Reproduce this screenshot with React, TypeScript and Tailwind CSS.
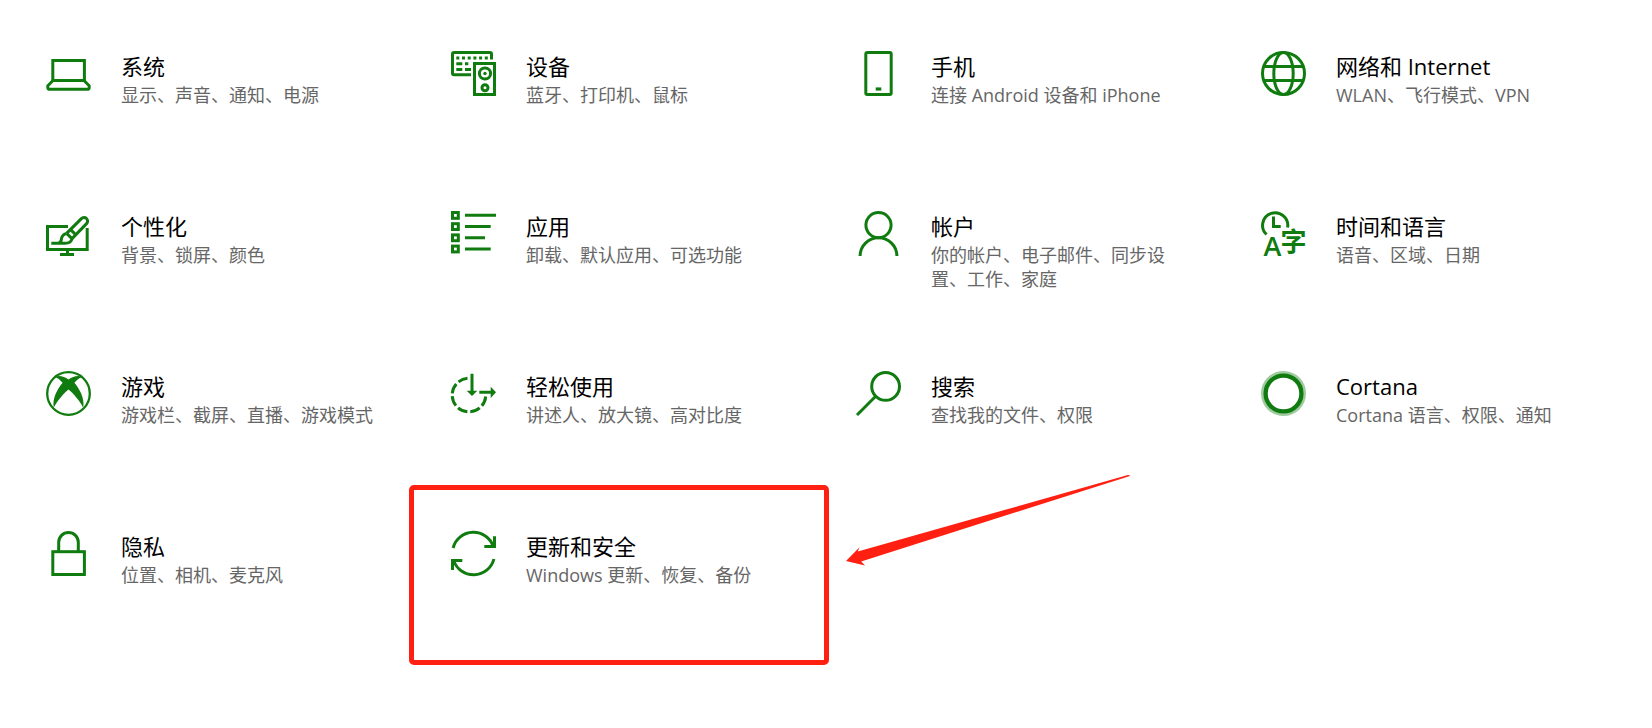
import type { ReactNode } from 'react'

const icons: Record<string, ReactNode> = {
  system: (
    <>
      <rect x="6.8" y="9.5" width="31.6" height="20" />
      <path d="M7 29.5 L1.8 34.8 V36.4 Q1.8 38.3 3.8 38.3 H41.2 Q43.2 38.3 43.2 36.4 V34.8 L38 29.5" />
    </>
  ),
  devices: (
    <>
      <path d="M20 23.7 H3 Q1.5 23.7 1.5 22.2 V3 Q1.5 1.5 3 1.5 H39 Q40.5 1.5 40.5 3 V8.5" />
      <path d="M5.3 7 H37" strokeDasharray="3 2.7" />
      <path d="M5.3 12.7 H11.3 M14 12.7 H17.3 M5.3 18.5 H11.3 M14 18.5 H20" />
      <rect x="23.5" y="12.5" width="20" height="31" />
      <circle cx="34" cy="22.5" r="5.6" />
      <circle cx="34" cy="22.5" r="1.7" fill="currentColor" stroke="none" />
      <circle cx="34" cy="36.7" r="3" />
    </>
  ),
  phone: (
    <>
      <rect x="9.8" y="1.5" width="25.4" height="42" rx="1.4" />
      <path d="M19.7 38 H25.3" strokeWidth="3.2" />
    </>
  ),
  network: (
    <>
      <circle cx="22.5" cy="22.5" r="21" />
      <ellipse cx="22.5" cy="22.5" rx="9.7" ry="21" />
      <path d="M3 15.4 H42 M3 29.6 H42" />
    </>
  ),
  personalization: (
    <>
      <path d="M22 15.5 H1.5 V38.4 H41.2 V17" />
      <path d="M21.5 39 V44 M14 43.5 H28" />
      <path d="M20.6 22.4 L35.4 7.6 A3.6 3.6 0 0 1 40.6 12.6 L26 27.6" />
      <path d="M24.6 18.6 L30 24 M20.6 22.4 L26 27.6" />
      <path d="M20.6 22.4 C16.5 23.5 15.5 26 15.2 29 C15 31 14 32.3 11.5 32.3 M5.3 32.3 H19 C23 32.3 25.5 31 26 27.6" />
    </>
  ),
  apps: (
    <>
      <rect x="1.5" y="1.5" width="5.8" height="5.8" />
      <rect x="1.5" y="12.7" width="5.8" height="5.8" />
      <rect x="1.5" y="23.9" width="5.8" height="5.8" />
      <rect x="1.5" y="35.1" width="5.8" height="5.8" />
      <path d="M14 4.2 H45 M14 15.5 H39.7 M14 26.7 H34 M14 38 H39.7" />
    </>
  ),
  accounts: (
    <>
      <circle cx="22.5" cy="14.1" r="12.6" />
      <path d="M4.1 45 A18.4 18.2 0 0 1 40.9 45" />
    </>
  ),
  time: (
    <>
      <path d="M5.5 23.5 A12.6 12.6 0 1 1 26.6 16.5" />
      <path d="M12.5 5.5 V15.4 H19.7" />
      <text
        x="2.5"
        y="45"
        fontSize="27"
        fontWeight="600"
        fill="currentColor"
        stroke="none"
        className="font-['Open_Sans',sans-serif]"
      >
        A
      </text>
      <text
        x="19.5"
        y="39.5"
        fontSize="26"
        fontWeight="700"
        fill="currentColor"
        stroke="none"
        className="font-['Noto_Sans_CJK_SC',sans-serif]"
      >
        字
      </text>
    </>
  ),
  gaming: (
    <>
      <circle cx="22.5" cy="22.5" r="21.3" strokeWidth="2.3" />
      <path
        d="M8.5 6.2 C12.5 3.8 18 5.5 22.5 8.4 C27 5.5 32.5 3.8 36.5 6.2 C33.5 6.6 31 8.5 28.4 11.8 C32.5 16.5 39.2 27 37.2 36.8 C34 30 28 23 22.5 18.4 C17 23 11 30 7.8 36.8 C5.8 27 12.5 16.5 16.6 11.8 C14 8.5 11.5 6.6 8.5 6.2 Z"
        fill="currentColor"
        stroke="none"
      />
    </>
  ),
  ease: (
    <>
      <path d="M34.7 25.5 A16.8 16.8 0 1 1 16.5 7.3" strokeDasharray="10.2 3" />
      <path d="M21 2.7 V21 M28.3 21.3 H41" />
      <path
        d="M15.7 19.7 H26.3 L21 25 Z M39.7 15.7 V27 L45 21.3 Z"
        fill="currentColor"
        stroke="none"
      />
    </>
  ),
  search: (
    <>
      <circle cx="29.6" cy="15.4" r="13.9" />
      <path d="M19.7 25.3 L1 44" />
    </>
  ),
  cortana: (
    <>
      <circle cx="22.5" cy="22.5" r="20.5" strokeWidth="4" opacity="0.4" />
      <circle cx="22.5" cy="22.5" r="17.9" strokeWidth="4.3" />
    </>
  ),
  privacy: (
    <>
      <rect x="6.8" y="20.7" width="31.6" height="22.8" />
      <path d="M12.7 20 V11.3 A9.8 9.8 0 0 1 32.3 11.3 V20" />
    </>
  ),
  update: (
    <>
      <path d="M2.1 17 A21 21 0 0 1 42.3 15.6" />
      <path d="M43.5 5.3 V15.5 H33.3" />
      <path d="M42.9 28 A21 21 0 0 1 2.6 29.4" />
      <path d="M1.5 39 V29.5 H11.3" />
    </>
  ),
}

const categories = [
  { icon: 'system', title: '系统', text: '显示、声音、通知、电源' },
  { icon: 'devices', title: '设备', text: '蓝牙、打印机、鼠标' },
  { icon: 'phone', title: '手机', text: '连接 Android 设备和 iPhone' },
  { icon: 'network', title: '网络和 Internet', text: 'WLAN、飞行模式、VPN' },
  { icon: 'personalization', title: '个性化', text: '背景、锁屏、颜色' },
  { icon: 'apps', title: '应用', text: '卸载、默认应用、可选功能' },
  { icon: 'accounts', title: '帐户', text: '你的帐户、电子邮件、同步设置、工作、家庭' },
  { icon: 'time', title: '时间和语言', text: '语音、区域、日期' },
  { icon: 'gaming', title: '游戏', text: '游戏栏、截屏、直播、游戏模式' },
  { icon: 'ease', title: '轻松使用', text: '讲述人、放大镜、高对比度' },
  { icon: 'search', title: '搜索', text: '查找我的文件、权限' },
  { icon: 'cortana', title: 'Cortana', text: 'Cortana 语言、权限、通知' },
  { icon: 'privacy', title: '隐私', text: '位置、相机、麦克风' },
  { icon: 'update', title: '更新和安全', text: 'Windows 更新、恢复、备份', marked: true },
]

function Icon({ name }: { name: string }) {
  return (
    <svg
      viewBox="0 0 45 45"
      className="w-[45px] h-[45px] shrink-0 overflow-visible text-[#107c10]"
      fill="none"
      stroke="currentColor"
      strokeWidth="3"
      aria-hidden="true"
    >
      {icons[name]}
    </svg>
  )
}

// Red frame and arrow drawn over the tile
function Marker() {
  return (
    <>
      <div className="absolute -top-4 -bottom-1 -left-3 -right-[3px] border-5 border-[#ff2012] rounded-[5px] pointer-events-none" />
      <svg
        viewBox="0 0 284 91"
        className="absolute left-full -top-[26px] ml-5 w-[284px] h-[91px] text-[#ff2012] pointer-events-none"
        fill="currentColor"
        aria-hidden="true"
      >
        <path d="M0 86 L13.5 72.3 L11.8 76.6 L281 0.2 Q284 -0.2 284 1 L15.2 86.4 L19 90.6 Z" />
      </svg>
    </>
  )
}

function Tile({ icon, title, text, marked }: (typeof categories)[number]) {
  return (
    <li className="relative">
      <a href="#" className="flex gap-[30px] min-h-40 pt-[30px] pl-[30px] pr-10">
        <Icon name={icon} />
        <div className="min-w-0">
          <h2 className="mb-0.5 text-[22px] leading-[30px] text-black">{title}</h2>
          <p className="text-[18px] leading-6 text-[#666666]">{text}</p>
        </div>
      </a>
      {marked && <Marker />}
    </li>
  )
}

export default function App() {
  return (
    <main
      lang="zh-CN"
      className="min-h-screen bg-white px-4 pt-[21px] font-['Open_Sans','Noto_Sans_CJK_SC',sans-serif]"
    >
      <ul className="grid grid-cols-4">
        {categories.map((category) => (
          <Tile key={category.icon} {...category} />
        ))}
      </ul>
    </main>
  )
}
